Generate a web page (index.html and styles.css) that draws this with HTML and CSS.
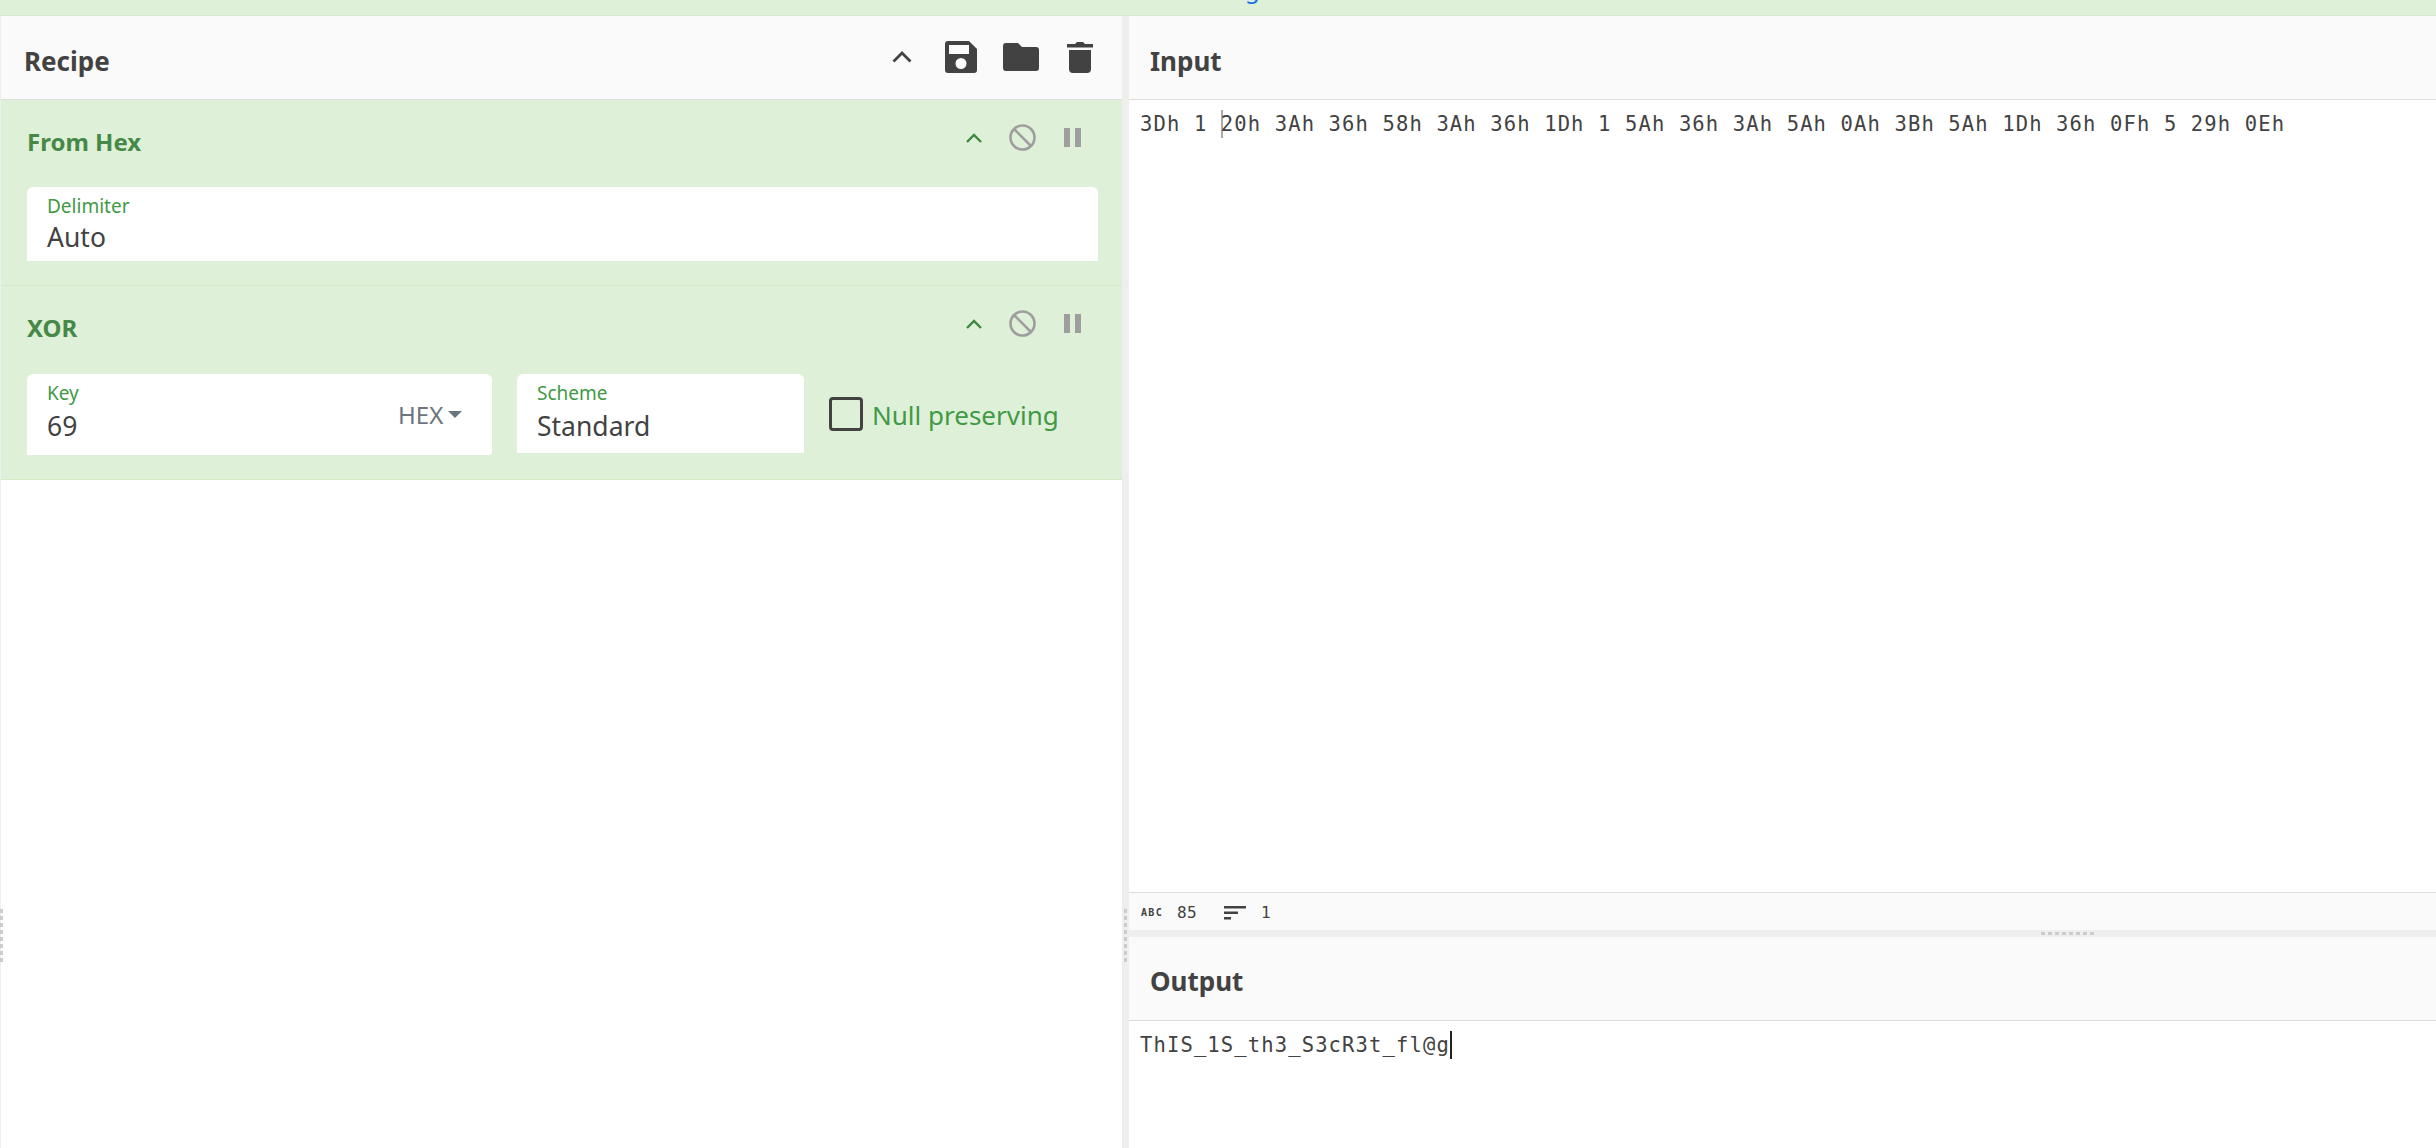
FILE: index.html
```html
<!DOCTYPE html>
<html lang="en">
<head>
<meta charset="utf-8">
<title>CyberChef</title>
<link rel="stylesheet" href="styles.css">
</head>
<body>
<div class="app">
  <div class="banner"><a class="banner-link">g</a></div>
  <div class="workspace">
    <section class="recipe">
      <header class="panel-head">
        <h1 class="panel-title">Recipe</h1>
        <div class="recipe-tools">
          <svg class="tool tool-chevron" viewBox="0 0 20 12"><path d="M1.5 10.5 10 2l8.500 8.500" fill="none" stroke="currentColor" stroke-width="2.800"/></svg>
          <svg class="tool tool-save" viewBox="0 0 32 32"><path fill-rule="evenodd" d="M3 0h21l8 8v21a3 3 0 0 1-3 3H3a3 3 0 0 1-3-3V3a3 3 0 0 1 3-3Zm1 4v9h20V4ZM16 17a5.500 5.500 0 1 0 0 11 5.500 5.500 0 0 0 0-11Z" fill="currentColor"/></svg>
          <svg class="tool tool-folder" viewBox="0 0 36 28"><path d="M3 0h12l4 4h14a3 3 0 0 1 3 3v18a3 3 0 0 1-3 3H3a3 3 0 0 1-3-3V3a3 3 0 0 1 3-3Z" fill="currentColor"/></svg>
          <svg class="tool tool-trash" viewBox="0 0 26 32"><path d="M2 9h22v19a4 4 0 0 1-4 4H6a4 4 0 0 1-4-4ZM0 3h8l2-2h6l2 2h8v3.500H0Z" fill="currentColor"/></svg>
        </div>
      </header>

      <article class="op op-first">
        <div class="op-head">
          <h2 class="op-title">From Hex</h2>
          <div class="op-tools">
            <svg class="op-chevron" viewBox="0 0 16 10"><path d="M1 9 8 2l7 7" fill="none" stroke="currentColor" stroke-width="2.400"/></svg>
            <svg class="op-ban" viewBox="0 0 27 27"><circle cx="13.500" cy="13.500" r="12" fill="none" stroke="currentColor" stroke-width="2.600"/><path d="M5 5l17 17" stroke="currentColor" stroke-width="2.600"/></svg>
            <svg class="op-pause" viewBox="0 0 17 19"><path d="M0 0h6v19H0ZM11 0h6v19h-6Z" fill="currentColor"/></svg>
          </div>
        </div>
        <div class="op-form">
          <div class="field field-full"><span class="field-label">Delimiter</span><span class="field-value">Auto</span></div>
        </div>
      </article>

      <article class="op">
        <div class="op-head">
          <h2 class="op-title">XOR</h2>
          <div class="op-tools">
            <svg class="op-chevron" viewBox="0 0 16 10"><path d="M1 9 8 2l7 7" fill="none" stroke="currentColor" stroke-width="2.400"/></svg>
            <svg class="op-ban" viewBox="0 0 27 27"><circle cx="13.500" cy="13.500" r="12" fill="none" stroke="currentColor" stroke-width="2.600"/><path d="M5 5l17 17" stroke="currentColor" stroke-width="2.600"/></svg>
            <svg class="op-pause" viewBox="0 0 17 19"><path d="M0 0h6v19H0ZM11 0h6v19h-6Z" fill="currentColor"/></svg>
          </div>
        </div>
        <div class="op-form">
          <div class="field field-key">
            <div class="key-main"><span class="field-label">Key</span><span class="field-value field-value-low">69</span></div>
            <div class="key-type"><span class="key-type-text">HEX</span><span class="caret"></span></div>
          </div>
          <div class="field field-scheme"><span class="field-label">Scheme</span><span class="field-value field-value-low">Standard</span></div>
          <label class="check"><span class="check-box"></span><span class="check-text">Null preserving</span></label>
        </div>
      </article>
      <div class="grip grip-outer"></div>
    </section>

    <div class="gutter"><div class="grip"></div></div>

    <section class="io">
      <div class="input-pane">
        <header class="panel-head panel-head-io"><h1 class="panel-title">Input</h1></header>
        <div class="editor editor-input"><span>3Dh 1 </span><span class="cursor cursor-input"></span><span>20h 3Ah 36h 58h 3Ah 36h 1Dh 1 5Ah 36h 3Ah 5Ah 0Ah 3Bh 5Ah 1Dh 36h 0Fh 5 29h 0Eh</span></div>
        <footer class="status">
          <span class="abc">ABC</span><span class="status-num status-len">85</span>
          <svg class="lines" viewBox="0 0 22 14"><path d="M0 0h22v2.500H0ZM0 5.500h14V8H0ZM0 11h7v2.500H0Z" fill="currentColor"/></svg><span class="status-num">1</span>
        </footer>
      </div>
      <div class="splitter"><div class="grip-h"></div></div>
      <div class="output-pane">
        <header class="panel-head panel-head-io"><h1 class="panel-title">Output</h1></header>
        <div class="editor editor-output"><span>ThIS_1S_th3_S3cR3t_fl@g</span><span class="cursor cursor-output"></span></div>
      </div>
    </section>
  </div>
</div>
</body>
</html>
```
FILE: styles.css
```css
* { box-sizing: border-box; }
html, body { margin: 0; height: 100%; overflow: hidden; background: #fff; }
body { font-family: "Noto Sans", "Open Sans", sans-serif; color: #424242; }
.app { display: flex; flex-direction: column; height: 100vh; }

.banner {
  height: 16px; flex: none; background: #dff0d8; border-bottom: 1px solid #d8e6d2;
  overflow: hidden; position: relative;
}
.banner-link {
  position: absolute; left: 1245px; top: -25px;
  font-size: 24px; line-height: 28px; color: #1a73e8;
}

.workspace { flex: 1; display: flex; min-height: 0; }

.recipe {
  width: 1122px; flex: none; border-left: 1px solid #eee; position: relative;
  display: flex; flex-direction: column;
}
.grip-outer { position: absolute; left: -1px; top: 893px; height: 54px; }

.panel-head {
  height: 84px; flex: none; background: #fafafa; border-bottom: 1px solid #ddd;
  display: flex; align-items: center; justify-content: space-between; padding: 0 29px 0 23px;
}
.panel-head-io { padding-left: 21px; }
.panel-title { margin: 0; font-size: 26px; font-weight: 700; color: #424242; line-height: 1; padding-top: 7px; }
.output-pane .panel-title { padding-top: 5px; }

.recipe-tools { display: flex; align-items: center; color: #424242; margin-top: -1px; }
.tool { display: block; flex: none; }
.tool-chevron { width: 20px; height: 12px; margin-right: 33px; }
.tool-save { width: 32px; height: 32px; margin-right: 26px; }
.tool-folder { width: 36px; height: 28px; margin-right: 28px; }
.tool-trash { width: 26px; height: 32px; }

.op { background: #dff0d8; border-bottom: 1px solid #d6e9c6; padding: 0 24px 24px 26px; flex: none; }
.op-head { height: 88px; display: flex; justify-content: space-between; position: relative; }
.op-first .op-head { height: 87px; }
.op-title { margin: 0; font-size: 24px; font-weight: 700; color: #468847; line-height: 1; padding-top: 30px; }
.op-tools { display: flex; align-items: center; height: 27px; margin-top: 24px; margin-right: 17px; color: #9e9e9e; }
.op-chevron { width: 16px; height: 10px; color: #3c8a40; margin-right: 27px; }
.op-ban { width: 27px; height: 27px; margin-right: 28px; }
.op-pause { width: 17px; height: 19px; }

.op-form { display: flex; align-items: flex-start; }
.field { background: #fff; border-radius: 6px 6px 0 0; position: relative; }
.field-full { width: 1071px; height: 74px; padding: 7px 20px 0; }
.field-scheme { width: 287px; height: 79px; margin-left: 25px; padding: 7px 20px 0; }
.field-key { width: 465px; height: 81px; display: flex; border-radius: 6px 6px 4px 0; }
.key-main { width: 343px; height: 79px; padding: 7px 20px 0; }
.key-type { flex: 1; padding: 25px 0 0 28px; display: flex; align-items: flex-start; }
.key-type-text { font-size: 24px; line-height: 32px; color: #6c757d; }
.caret { width: 0; height: 0; margin: 12px 0 0 5px; border-left: 7px solid transparent; border-right: 7px solid transparent; border-top: 7px solid #6c757d; }
.field-label { display: block; font-size: 19px; line-height: 24px; color: #3f9a45; }
.field-value { display: block; font-size: 26.500px; line-height: 38px; color: #424242; }
.field-value-low { padding-top: 2px; }

.check { display: flex; align-items: center; margin: 22px 0 0 25px; }
.check-box { width: 34px; height: 34px; border: 3px solid #424242; border-radius: 4px; flex: none; }
.check-text { font-size: 26px; line-height: 34px; color: #3f9a45; margin-left: 9px; padding-top: 2px; }

.gutter { width: 7px; flex: none; background: #eee; position: relative; }
.gutter .grip { position: absolute; left: 2px; top: 893px; height: 54px; }
.grip { width: 3px; background: repeating-linear-gradient(to bottom, #ccc 0 4px, transparent 4px 7px); }

.io { flex: 1; min-width: 0; display: flex; flex-direction: column; }
.input-pane { flex: 1; min-height: 0; display: flex; flex-direction: column; }
.editor {
  font-family: "DejaVu Sans Mono", "Liberation Mono", monospace; font-size: 20.500px;
  letter-spacing: 1.130px; line-height: 28px; color: #424242; white-space: pre;
  padding: 10px 0 0 11px; background: #fff; display: flex; align-items: flex-start;
}
.editor-input { flex: 1; min-height: 0; }
.output-pane { height: 211px; flex: none; display: flex; flex-direction: column; }
.editor-output { flex: 1; padding-top: 10px; }
.cursor { width: 1px; height: 28px; flex: none; background: #555; }
.cursor-input { width: 2px; margin-right: -2px; background: #aaa; }
.cursor-output { background: #222; width: 2px; }

.status {
  height: 38px; flex: none; background: #fafafa; border-top: 1px solid #ddd;
  display: flex; align-items: center; padding: 2px 0 0 12px; color: #424242;
}
.abc { font-family: "DejaVu Sans Mono", monospace; font-size: 10px; font-weight: 700; letter-spacing: 1.300px; width: 36px; flex: none; }
.status-num { font-family: "DejaVu Sans Mono", monospace; font-size: 16px; letter-spacing: .4px; }
.status-len { width: 47px; flex: none; }
.lines { width: 22px; height: 14px; margin-right: 15px; flex: none; }

.splitter { height: 7px; flex: none; background: #eee; position: relative; }
.grip-h {
  position: absolute; left: 912px; top: 2px; width: 54px; height: 3px;
  background: repeating-linear-gradient(to right, #ccc 0 4px, transparent 4px 7px);
}
```
